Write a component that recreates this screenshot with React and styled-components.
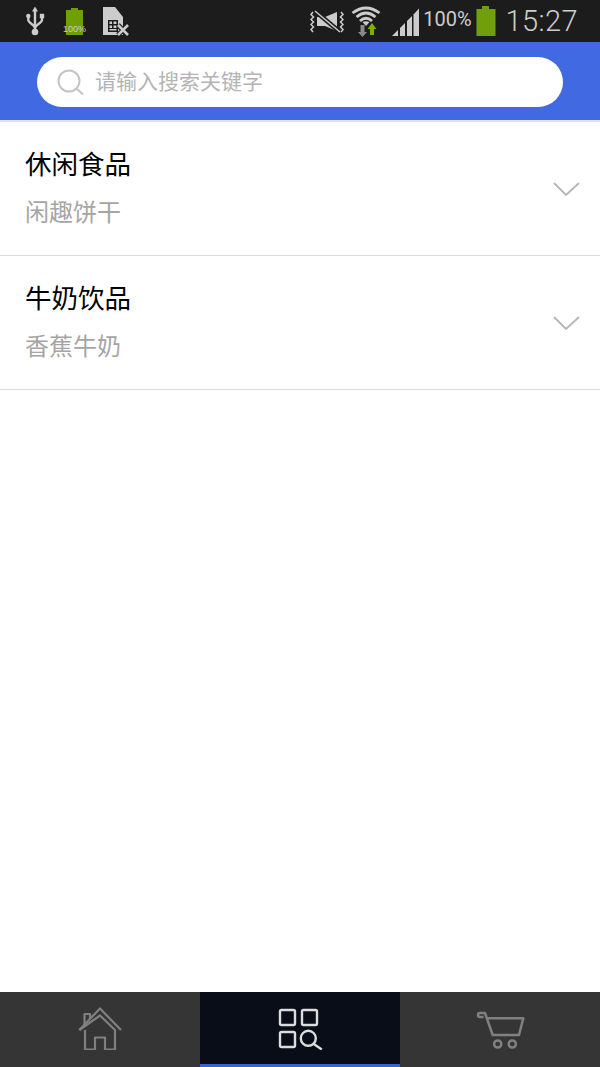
import React from "react";
import styled, { createGlobalStyle } from "styled-components";

const GlobalStyle = createGlobalStyle`
  html, body {
    margin: 0;
    padding: 0;
    background: #fff;
  }
  * {
    box-sizing: border-box;
  }
`;

const categories = [
  { title: "休闲食品", sub: "闲趣饼干" },
  { title: "牛奶饮品", sub: "香蕉牛奶" },
];

const UsbIcon = () => (
  <svg width="20" height="30" viewBox="0 0 20 30">
    <g fill="none" stroke="#ccc" strokeWidth="2.400">
      <path d="M9 4v22" />
      <path d="M2.300 11v3c0 3 6.700 5 6.700 8" />
      <path d="M16 11v3c0 3-7 5-7 8" />
    </g>
    <g fill="#ccc">
      <path d="M9 .5l3 5H6z" />
      <circle cx="9" cy="26" r="3.300" />
      <circle cx="2.300" cy="10" r="2.200" />
      <rect x="13.800" y="7.800" width="4.400" height="4.400" />
    </g>
  </svg>
);

const SmallBattery = () => (
  <BatteryWrap>
    <svg width="19" height="28" viewBox="0 0 19 28">
      <path d="M6 1h7v2h5v25H1V3h5z" fill="#6f9f00" />
    </svg>
    <BatteryLabel>100%</BatteryLabel>
  </BatteryWrap>
);

const SimIcon = () => (
  <svg width="26" height="30" viewBox="0 0 26 30">
    <path d="M0 1h12l8 10v18H0z" fill="#ccc" />
    <rect x="5" y="14" width="10" height="12" fill="#1c1c1c" />
    <g fill="#ccc">
      <rect x="6.500" y="15.500" width="2.500" height="2.500" />
      <rect x="10.500" y="15.500" width="3" height="2.500" />
      <rect x="6.500" y="19.500" width="2.500" height="2.500" />
      <rect x="10.500" y="19.500" width="3" height="2.500" />
      <rect x="6.500" y="23" width="7" height="1.500" />
    </g>
    <path d="M15 19l10 10M25 19L15 29" stroke="#1c1c1c" strokeWidth="5" />
    <path d="M15 19l10 10M25 19L15 29" stroke="#ccc" strokeWidth="2.600" />
  </svg>
);

const VibrateIcon = () => (
  <svg width="34" height="24" viewBox="0 0 34 24">
    <g fill="none" stroke="#ccc" strokeWidth="1.500">
      <path d="M3 3L1 5.500l2.500 2.500L1 10.500 3.500 13 1 15.500 3.500 18 1 20.500 3 23" />
      <path d="M31 3l2 2.500L30.500 8 33 10.500 30.500 13 33 15.500 30.500 18 33 20.500 31 23" />
    </g>
    <path d="M7 8h8l12-5v19l-12-5H7z" fill="#ccc" />
    <path d="M5 2l25 21" stroke="#1c1c1c" strokeWidth="4.500" />
    <path d="M5 2l25 21" stroke="#ccc" strokeWidth="1.500" />
  </svg>
);

const WifiIcon = () => (
  <svg width="30" height="32" viewBox="0 0 30 32">
    <g fill="none" stroke="#ccc" strokeWidth="2.800">
      <path d="M1.500 8Q15-2 28.500 8" />
      <path d="M5.500 12Q15 4 24.500 12" />
      <path d="M9 16Q15 10.500 21 16" />
    </g>
    <path d="M11.500 17q3.500-1.500 7 0L15 21z" fill="#ccc" />
    <path d="M9.500 20h4v7H16l-4.500 5L7 27h2.500z" fill="#8a8a8a" />
    <path d="M21 18l4.500 6H23v6h-4v-6h-2.500z" fill="#7fb000" />
  </svg>
);

const SignalIcon = () => (
  <svg width="28" height="30" viewBox="0 0 28 30">
    <g fill="#ccc">
      <path d="M0 30l6-6v6z" />
      <path d="M8 22l5-5v13H8z" />
      <path d="M15 15l5-5v20h-5z" />
      <path d="M21.500 8.500l5.500-6V30h-5.500z" />
    </g>
  </svg>
);

const BigBattery = () => (
  <svg width="20" height="30" viewBox="0 0 20 30">
    <path d="M6 0h7v3h6.500v27H.5V3H6z" fill="#709f0d" />
  </svg>
);

const SearchIcon = () => (
  <svg width="28" height="28" viewBox="0 0 28 28">
    <g fill="none" stroke="#c4c4c4" strokeWidth="2">
      <circle cx="12" cy="13" r="10.500" />
      <path d="M20 21l6 5.500" />
    </g>
  </svg>
);

const ChevronIcon = () => (
  <svg width="28" height="16" viewBox="0 0 28 16">
    <path d="M1 2l12 12L26 2" fill="none" stroke="#b5b5b5" strokeWidth="1.800" />
  </svg>
);

const HomeIcon = () => (
  <svg width="44" height="44" viewBox="0 0 44 44">
    <g fill="none" stroke="#808080" strokeWidth="2.200" strokeLinejoin="round">
      <path d="M1.300 24L22 2.500 43 24" />
      <path d="M1.300 24L22 9.500 37 24v19.500H27V31.500H17v12H7V24" />
      <path d="M6.500 21V8h5.500v4" />
    </g>
  </svg>
);

const GridSearchIcon = () => (
  <svg width="46" height="44" viewBox="0 0 46 44">
    <g fill="none" stroke="#dcdcdc" strokeWidth="2.400">
      <rect x="3" y="4" width="15" height="15" rx="1.500" />
      <rect x="25" y="4" width="15" height="15" rx="1.500" />
      <rect x="3" y="26" width="15" height="15" rx="1.500" />
      <circle cx="31.300" cy="32.300" r="7.500" />
      <path d="M36.800 38l8 5.500" />
    </g>
  </svg>
);

const CartIcon = () => (
  <svg width="50" height="44" viewBox="0 0 50 44">
    <g fill="none" stroke="#808080" strokeWidth="2.500" strokeLinejoin="round">
      <path d="M11.700 12.300H48.300L44 29H17.700L10 7H5a2 2 0 0 0 0 4h3.500" />
      <circle cx="22.700" cy="38" r="3.600" />
      <circle cx="37.300" cy="38" r="3.600" />
    </g>
  </svg>
);

export default function App() {
  return (
    <Page>
      <GlobalStyle />
      <StatusBar>
        <StatusGroup>
          <UsbIcon />
          <SmallBattery />
          <SimIcon />
        </StatusGroup>
        <StatusRight>
          <VibrateIcon />
          <WifiSlot>
            <WifiIcon />
          </WifiSlot>
          <SignalIcon />
          <Percent>100%</Percent>
          <BigBattery />
          <Clock>15:27</Clock>
        </StatusRight>
      </StatusBar>
      <SearchHeader>
        <SearchPill>
          <SearchIcon />
          <SearchText>请输入搜索关键字</SearchText>
        </SearchPill>
      </SearchHeader>
      <CategoryList>
        {categories.map((cat) => (
          <CategoryRow key={cat.title}>
            <div>
              <CategoryTitle>{cat.title}</CategoryTitle>
              <CategorySub>{cat.sub}</CategorySub>
            </div>
            <ChevronIcon />
          </CategoryRow>
        ))}
      </CategoryList>
      <TabBar>
        <Tab>
          <HomeIcon />
        </Tab>
        <Tab $active>
          <GridSearchIcon />
        </Tab>
        <Tab>
          <CartIcon />
        </Tab>
      </TabBar>
    </Page>
  );
}

const Page = styled.div`
  width: 600px;
  height: 1067px;
  display: flex;
  flex-direction: column;
  overflow: hidden;
  background: #fff;
  font-family: "Liberation Sans", "Noto Sans CJK SC", sans-serif;
`;

const StatusBar = styled.div`
  height: 42px;
  background: #1c1c1c;
  display: flex;
  align-items: center;
  justify-content: space-between;
  padding: 0 22px 0 26px;
  flex-shrink: 0;
`;

const StatusGroup = styled.div`
  display: flex;
  align-items: center;
  gap: 19px;
`;

const StatusRight = styled.div`
  display: flex;
  align-items: center;
`;

const WifiSlot = styled.div`
  display: flex;
  margin: 0 11px 0 7px;
`;

const BatteryWrap = styled.div`
  position: relative;
  width: 19px;
  height: 28px;
  svg {
    display: block;
  }
`;

const BatteryLabel = styled.span`
  position: absolute;
  left: -4px;
  bottom: 1px;
  width: 27px;
  text-align: center;
  font-size: 9px;
  line-height: 10px;
  color: #ccc;
`;

const Percent = styled.span`
  font-family: Roboto, sans-serif;
  font-size: 20px;
  color: #ccc;
  margin: 0 4px 4px 3px;
`;

const Clock = styled.span`
  font-family: Roboto, sans-serif;
  font-weight: 300;
  font-size: 29px;
  letter-spacing: 0.4px;
  color: #ccc;
  margin-left: 10px;
`;

const SearchHeader = styled.div`
  height: 78px;
  background: #4169e1;
  padding: 15px 37px 13px;
  flex-shrink: 0;
`;

const SearchPill = styled.div`
  height: 50px;
  background: #fff;
  border-radius: 25px;
  display: flex;
  align-items: center;
  gap: 10px;
  padding-left: 20px;
`;

const SearchText = styled.span`
  font-size: 21px;
  line-height: 26px;
  color: #b4b4b4;
`;

const CategoryList = styled.div`
  flex: 1;
  border-top: 2px solid #e4e4e8;
`;

const CategoryRow = styled.div`
  height: 134px;
  border-bottom: 1px solid #dcdcdc;
  display: flex;
  align-items: center;
  justify-content: space-between;
  padding: 0 19px 0 25px;
`;

const CategoryTitle = styled.div`
  font-size: 26.500px;
  line-height: 32px;
  color: #000;
`;

const CategorySub = styled.div`
  font-size: 24px;
  line-height: 30px;
  color: #a5a5a5;
  margin-top: 17px;
`;

const TabBar = styled.div`
  height: 75px;
  display: flex;
  flex-shrink: 0;
`;

const Tab = styled.div`
  flex: 1;
  display: flex;
  align-items: center;
  justify-content: center;
  background: ${(p) => (p.$active ? "#090d17" : "#353535")};
  border-bottom: 3px solid ${(p) => (p.$active ? "#3b63cc" : "#353535")};
`;
